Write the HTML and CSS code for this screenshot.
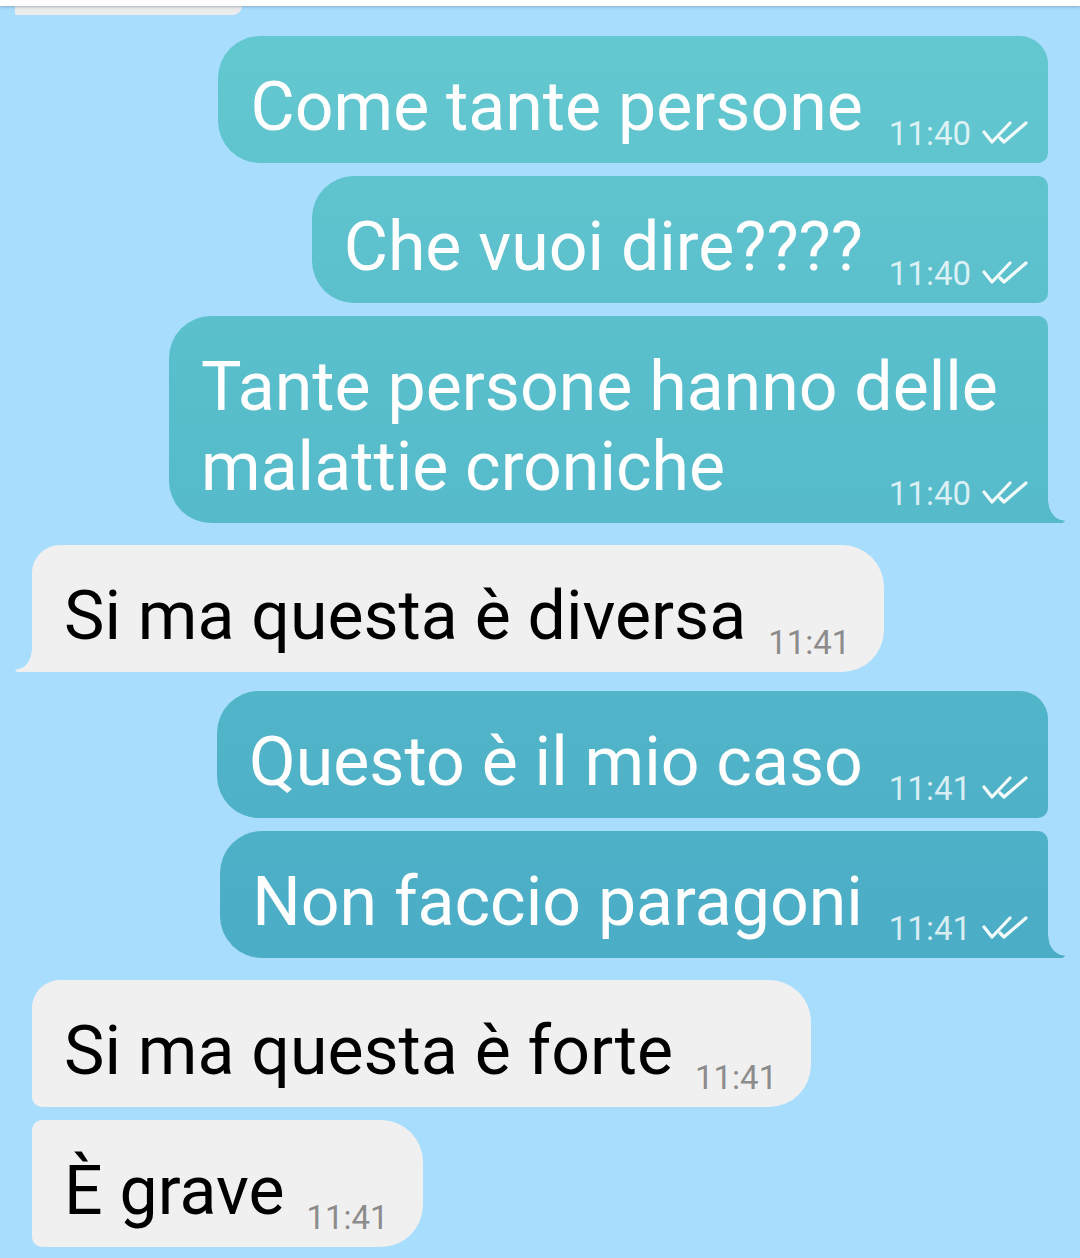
FILE: index.html
```html
<!DOCTYPE html>
<html lang="it">
<head>
<meta charset="utf-8">
<title>Chat</title>
<link rel="stylesheet" href="styles.css">
</head>
<body>
<div class="screen">
  <div class="topbar"></div>
  <div class="prev-piece"></div>
  <div class="chat">
    <div class="row out first">
      <div class="bubble out top">Come tante persone<span class="meta"><span class="time">11:40</span><svg class="ticks" viewBox="0 0 46 26" width="46" height="26"><path d="M2 12 L10 22 L28 3"/><path d="M18 18 L22 22 L44 3"/></svg></span></div>
    </div>
    <div class="row out">
      <div class="bubble out mid">Che vuoi dire????<span class="meta"><span class="time">11:40</span><svg class="ticks" viewBox="0 0 46 26" width="46" height="26"><path d="M2 12 L10 22 L28 3"/><path d="M18 18 L22 22 L44 3"/></svg></span></div>
    </div>
    <div class="row out">
      <div class="bubble out last"><span class="seg">Tante persone hanno delle </span><span class="seg">malattie croniche</span><span class="meta"><span class="time">11:40</span><svg class="ticks" viewBox="0 0 46 26" width="46" height="26"><path d="M2 12 L10 22 L28 3"/><path d="M18 18 L22 22 L44 3"/></svg></span></div>
    </div>
    <div class="row in group">
      <div class="bubble in single">Si ma questa è diversa<span class="meta"><span class="time">11:41</span></span></div>
    </div>
    <div class="row out group g2">
      <div class="bubble out top">Questo è il mio caso<span class="meta"><span class="time">11:41</span><svg class="ticks" viewBox="0 0 46 26" width="46" height="26"><path d="M2 12 L10 22 L28 3"/><path d="M18 18 L22 22 L44 3"/></svg></span></div>
    </div>
    <div class="row out">
      <div class="bubble out last">Non faccio paragoni<span class="meta"><span class="time">11:41</span><svg class="ticks" viewBox="0 0 46 26" width="46" height="26"><path d="M2 12 L10 22 L28 3"/><path d="M18 18 L22 22 L44 3"/></svg></span></div>
    </div>
    <div class="row in group">
      <div class="bubble in top">Si ma questa è forte<span class="meta"><span class="time">11:41</span></span></div>
    </div>
    <div class="row in">
      <div class="bubble in mid">È grave<span class="meta"><span class="time">11:41</span></span></div>
    </div>
  </div>
</div>
</body>
</html>
```

FILE: styles.css
```css
* { box-sizing: border-box; }
html, body {
  margin: 0;
  padding: 0;
}
body {
  background: #a8ddfd;
  font-family: Roboto, "Noto Sans", "Liberation Sans", sans-serif;
  width: 1080px;
  height: 1258px;
  overflow: hidden;
}
.screen {
  position: relative;
}
.topbar {
  height: 6px;
  background: #fdfdfd;
  box-shadow: 0 1px 3px rgba(90, 110, 130, 0.45);
  position: relative;
  z-index: 2;
}
.prev-piece {
  margin-left: 15px;
  width: 227px;
  height: 9px;
  background: #ececec;
  border-bottom-right-radius: 14px;
  border-bottom-left-radius: 2px;
}
.chat {
  display: flex;
  flex-direction: column;
  padding: 21px 32px 0 32px;
}
.row {
  display: flex;
  margin-top: 13px;
}
.row.first { margin-top: 0; }
.row.group { margin-top: 22px; }
.row.group.g2 { margin-top: 19px; }
.row.out { justify-content: flex-end; }
.row.in { justify-content: flex-start; }

.bubble {
  position: relative;
  display: flow-root;
  font-size: 68px;
  line-height: 80px;
  padding: 31px 20px 16px 32px;
  max-width: 879px;
  letter-spacing: 0;
}
.bubble.out {
  color: #ffffff;
  background: linear-gradient(to bottom, #64c9d0 0px, #58bdcb 420px, #4badc6 950px, #44a4c3 1258px);
  background-attachment: fixed;
  border-radius: 42px 10px 10px 42px;
}
.bubble.out.top { border-top-right-radius: 28px; }
.bubble.out.last { border-bottom-right-radius: 0; }
.bubble.out.last::after {
  content: "";
  position: absolute;
  right: -17px;
  bottom: 0;
  width: 17px;
  height: 22px;
  background: linear-gradient(to bottom, #64c9d0 0px, #58bdcb 420px, #4badc6 950px, #44a4c3 1258px);
  background-attachment: fixed;
  -webkit-mask: radial-gradient(ellipse 17px 20px at 100% 0, transparent 96%, #000 100%);
  mask: radial-gradient(ellipse 17px 20px at 100% 0, transparent 96%, #000 100%);
  border-bottom-right-radius: 3px;
}
.bubble.in {
  color: #000000;
  background: #f0f0f0;
  border-radius: 10px 42px 42px 10px;
  padding-right: 34px;
}
.bubble.in.top { border-top-left-radius: 28px; }
.bubble.in.single { border-top-left-radius: 28px; border-bottom-left-radius: 0; }
.bubble.in.single::after {
  content: "";
  position: absolute;
  left: -17px;
  bottom: 0;
  width: 17px;
  height: 22px;
  background: #f0f0f0;
  -webkit-mask: radial-gradient(ellipse 17px 20px at 0 0, transparent 96%, #000 100%);
  mask: radial-gradient(ellipse 17px 20px at 0 0, transparent 96%, #000 100%);
  border-bottom-left-radius: 3px;
}

.meta {
  float: right;
  display: flex;
  align-items: center;
  height: 28px;
  margin: 53px 0 -10px 26px;
  font-size: 33px;
  line-height: 28px;
}
.bubble.in .meta { margin-left: 22px; }
.bubble.out .meta .time { color: rgba(255, 255, 255, 0.78); }
.bubble.in .meta .time { color: #8c8c8c; }
.ticks {
  margin-left: 11px;
  margin-top: -2px;
  fill: none;
  stroke: #f4fcfd;
  stroke-width: 3.2;
  stroke-linecap: round;
  stroke-linejoin: round;
}
```
